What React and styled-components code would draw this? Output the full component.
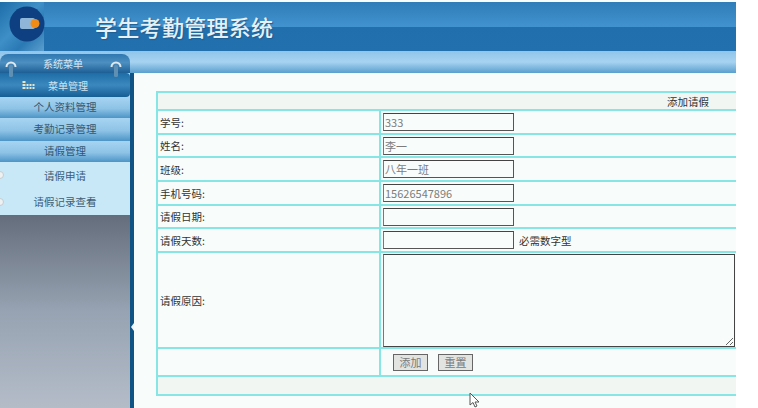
import React from "react";
import styled, { createGlobalStyle } from "styled-components";

const GlobalStyle = createGlobalStyle`
  html, body {
    margin: 0;
    padding: 0;
    background: #fff;
    overflow: hidden;
  }
  body {
    font-family: "Noto Sans CJK SC", "Liberation Sans", sans-serif;
    font-size: 11px;
    color: #333;
  }
`;

const Page = styled.div`
  position: relative;
  width: 736px;
  height: 408px;
  overflow: hidden;
  display: flex;
  flex-direction: column;
  background: #f8fdfb;
`;

const Banner = styled.div`
  height: 49px;
  margin-top: 2px;
  display: flex;
  flex-shrink: 0;
  background: linear-gradient(
    to bottom,
    #2f7cb8 0,
    #4193cf 25px,
    #216fac 25px,
    #2270ae 100%
  );
`;

const LogoBox = styled.div`
  width: 44px;
  display: flex;
  align-items: flex-start;
  justify-content: flex-end;
  padding-top: 4px;
  box-sizing: border-box;
  background: linear-gradient(135deg, #1d6da8 0, #3e8ec8 45%, #2a79b4 70%, #5b9fcf 100%);
`;

const LogoMark = styled.svg`
  display: block;
  margin-right: -1px;
`;

const Title = styled.h1`
  margin: 0 0 0 51px;
  padding-bottom: 1px;
  align-self: center;
  font-size: 22px;
  font-weight: 500;
  line-height: 26px;
  letter-spacing: 0.3px;
  color: #e6f0f5;
  text-shadow: 1px 1px 1px #1c5f94;
  white-space: nowrap;
`;

const SubBar = styled.div`
  height: 22px;
  flex-shrink: 0;
  display: flex;
  align-items: flex-end;
  background: linear-gradient(to bottom, #8fc5ea, #a7d3f0 50%, #5a9fce);
`;

const MenuTab = styled.div`
  width: 130px;
  height: 19px;
  display: flex;
  align-items: center;
  justify-content: center;
  padding-right: 4px;
  box-sizing: border-box;
  font-size: 10px;
  color: #d4e4ef;
  border-radius: 8px 8px 0 0;
  background: linear-gradient(to bottom, #2f78b1, #4d8fc0 45%, #1d5f95);
`;

const Columns = styled.div`
  flex: 1;
  display: flex;
  min-height: 0;
`;

const Sidebar = styled.aside`
  width: 134px;
  box-sizing: border-box;
  flex-shrink: 0;
  display: flex;
  flex-direction: column;
  border-right: 4px solid #0f5485;
  background: #b8d9ee;
  position: relative;
`;

const MenuHead = styled.div`
  height: 24px;
  display: flex;
  align-items: center;
  padding-left: 22px;
  gap: 12px;
  font-size: 10px;
  color: #cfe2ee;
  border-radius: 0 4px 4px 0;
  background: linear-gradient(to bottom, #1f6da6, #3b88bf 50%, #155e94);
`;

const MenuItem = styled.div`
  height: ${(p) => p.$h}px;
  box-sizing: border-box;
  padding-bottom: 2px;
  display: flex;
  align-items: center;
  justify-content: center;
  font-size: 10.5px;
  color: #345670;
  background: linear-gradient(to bottom, #a7d4f2, #8ec3e6 55%, #4c95c6);
`;

const SubList = styled.div`
  height: 53px;
  display: flex;
  flex-direction: column;
  background: #c9e8f7;
`;

const SubItem = styled.div`
  flex: 1;
  display: flex;
  align-items: center;
  justify-content: center;
  position: relative;
  font-size: 10.5px;
  color: #3d5e76;
  &::before {
    content: "";
    position: absolute;
    left: -4px;
    top: 50%;
    margin-top: -4px;
    width: 8px;
    height: 8px;
    border-radius: 50%;
    background: #eef1f2;
    border: 1px solid #c4ccd1;
    box-sizing: border-box;
  }
`;

const SideRest = styled.div`
  flex: 1;
  background: linear-gradient(to bottom, #646d7c, #97a3b2 50%, #b4bcc8);
`;

const Pin = styled.svg`
  position: absolute;
  top: 60px;
  left: ${(p) => p.$left}px;
`;

const Notch = styled.span`
  position: absolute;
  right: -4px;
  top: 250px;
  width: 0;
  height: 0;
  border-top: 4px solid transparent;
  border-bottom: 4px solid transparent;
  border-right: 3px solid #f0f5f8;
`;

const Content = styled.main`
  flex: 1;
  min-width: 0;
  padding: 18px 0 0 22px;
`;

const Table = styled.table`
  width: 584px;
  border-collapse: collapse;
  table-layout: fixed;
  background: #f8fdfb;
  border: 2px solid #86e6e6;
`;

const Cell = styled.td`
  height: ${(p) => p.$h}px;
  padding: 0 2px;
  box-sizing: border-box;
  border: 2px solid #86e6e6;
  font-size: 10.5px;
  color: #333;
  vertical-align: middle;
`;

const BandCell = styled(Cell)`
  background: #f1f6f2;
  text-align: right;
  padding-right: 29px;
`;

const Field = styled.input`
  width: 131px;
  height: 18px;
  box-sizing: border-box;
  padding: 0 1px;
  margin: 0;
  display: inline-block;
  vertical-align: middle;
  font-family: inherit;
  font-size: 11px;
  color: #7c7c7c;
  background: #f8fdfb;
  border: 1px solid #555;
  border-top-color: #444;
  border-left-color: #777;
`;

const Hint = styled.span`
  margin-left: 5px;
  vertical-align: middle;
`;

const Reason = styled.textarea`
  display: block;
  width: 352px;
  height: 93px;
  box-sizing: border-box;
  margin: 0;
  background: #f8fdfb;
  border: 1px solid #444;
  border-left-color: #777;
`;

const Actions = styled.div`
  display: flex;
  gap: 10px;
  padding-left: 10px;
`;

const ActionButton = styled.button`
  width: 35px;
  height: 17px;
  padding: 0;
  font-family: inherit;
  font-size: 11px;
  line-height: 15px;
  color: #7a7a7a;
  background: #e2e4e2;
  border: 1px solid #666;
`;

const Cursor = styled.svg`
  position: absolute;
  left: 469px;
  top: 392px;
`;

const rows = [
  { label: "学号:", value: "333", h: 24 },
  { label: "姓名:", value: "李一", h: 23 },
  { label: "班级:", value: "八年一班", h: 24 },
  { label: "手机号码:", value: "15626547896", h: 24 },
  { label: "请假日期:", value: "", h: 23 },
];

function PinIcon({ left }) {
  return (
    <Pin $left={left} width="12" height="18" viewBox="0 0 12 18">
      <path d="M1.5 7 A4.5 4.5 0 0 1 10.5 7" fill="none" stroke="#dfe8ee" strokeWidth="2" />
      <rect x="4" y="5" width="4" height="12" rx="1.5" fill="#5f8fb3" />
    </Pin>
  );
}

export default function App() {
  return (
    <>
      <GlobalStyle />
      <Page>
        <Banner>
          <LogoBox>
            <LogoMark width="36" height="36" viewBox="0 0 36 36">
              <circle cx="18" cy="18" r="17.5" fill="#0e3f80" />
              <rect x="11" y="12" width="15" height="11" rx="2" fill="#8fb6d8" />
              <circle cx="26" cy="17.5" r="4.5" fill="#f08c16" />
            </LogoMark>
          </LogoBox>
          <Title>学生考勤管理系统</Title>
        </Banner>
        <SubBar>
          <MenuTab>系统菜单</MenuTab>
        </SubBar>
        <Columns>
          <Sidebar>
            <MenuHead>
              <svg width="14" height="9" viewBox="0 0 13 9">
                <path
                  d="M0 0h3v2H0zM0 3h3v2H0zM0 6h3v2H0zM4 3h2v2H4zM7 3h2v2H7zM10 3h2v2h-2zM4 6h2v2H4zM7 6h2v2H7zM10 6h2v2h-2z"
                  fill="#e8e4c8"
                />
              </svg>
              菜单管理
            </MenuHead>
            <MenuItem $h={21}>个人资料管理</MenuItem>
            <MenuItem $h={23}>考勤记录管理</MenuItem>
            <MenuItem $h={21}>请假管理</MenuItem>
            <SubList>
              <SubItem>请假申请</SubItem>
              <SubItem>请假记录查看</SubItem>
            </SubList>
            <SideRest />
            <Notch />
          </Sidebar>
          <Content>
            <Table>
              <colgroup>
                <col width="223" />
                <col />
              </colgroup>
              <tbody>
                <tr>
                  <BandCell colSpan={2} $h={18}>
                    添加请假
                  </BandCell>
                </tr>
                {rows.map((r) => (
                  <tr key={r.label}>
                    <Cell $h={r.h}>{r.label}</Cell>
                    <Cell $h={r.h}>
                      <Field readOnly value={r.value} />
                    </Cell>
                  </tr>
                ))}
                <tr>
                  <Cell $h={24}>请假天数:</Cell>
                  <Cell $h={24}>
                    <Field readOnly value="" />
                    <Hint>必需数字型</Hint>
                  </Cell>
                </tr>
                <tr>
                  <Cell $h={96}>请假原因:</Cell>
                  <Cell $h={96}>
                    <Reason />
                  </Cell>
                </tr>
                <tr>
                  <Cell $h={28} />
                  <Cell $h={28}>
                    <Actions>
                      <ActionButton>添加</ActionButton>
                      <ActionButton>重置</ActionButton>
                    </Actions>
                  </Cell>
                </tr>
                <tr>
                  <BandCell colSpan={2} $h={19} />
                </tr>
              </tbody>
            </Table>
          </Content>
        </Columns>
        <PinIcon left={5} />
        <PinIcon left={110} />
        <Cursor width="12" height="16" viewBox="0 0 12 16">
          <path d="M1 1 L1 13 L4 10.5 L6 15 L8 14 L6 10 L10 10 Z" fill="#fff" stroke="#555" strokeWidth="1" />
        </Cursor>
      </Page>
    </>
  );
}
